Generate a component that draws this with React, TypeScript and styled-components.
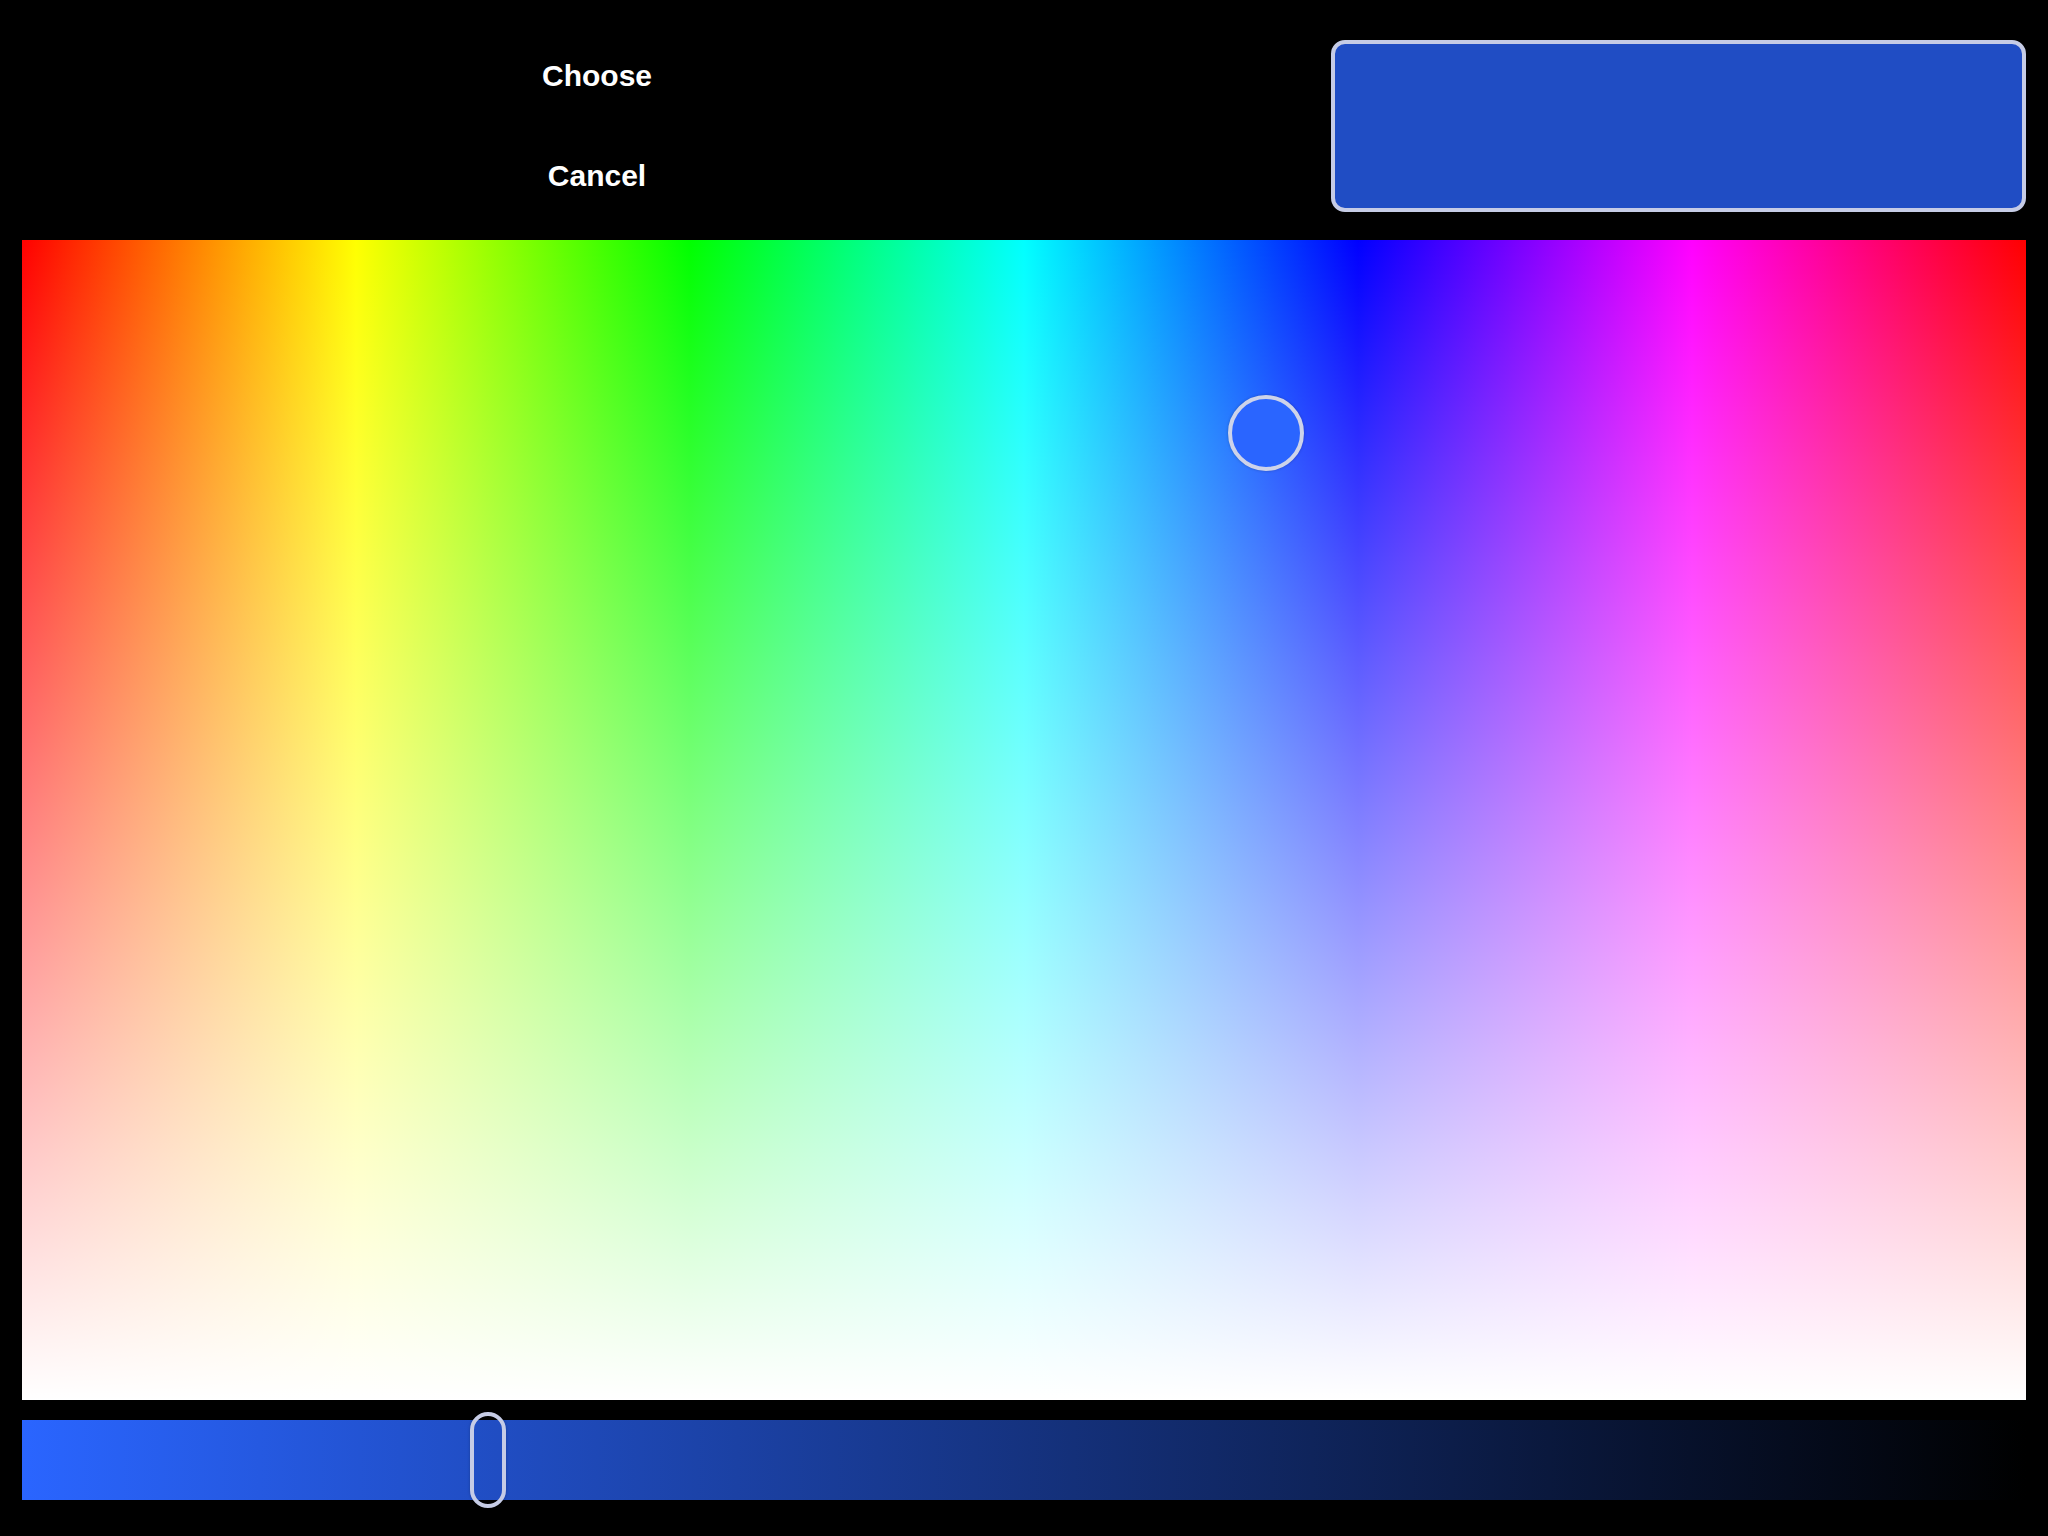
import React from "react";
import styled, { createGlobalStyle } from "styled-components";

const GlobalStyle = createGlobalStyle`
  html, body {
    margin: 0;
    padding: 0;
    background: #000;
  }
  body {
    font-family: "Liberation Sans", Arial, Helvetica, sans-serif;
    -webkit-font-smoothing: antialiased;
  }
  * { box-sizing: border-box; }
`;

const Page = styled.div`
  width: 2048px;
  height: 1536px;
  background: #000;
  padding: 40px 22px 36px 22px;
  display: flex;
  flex-direction: column;
`;

const TopRow = styled.div`
  display: grid;
  grid-template-columns: 1150px 1fr;
  column-gap: 159px;
  height: 172px;
`;

const Actions = styled.div`
  display: flex;
  flex-direction: column;
  align-items: center;
  gap: 29px;
`;

const ActionButton = styled.button`
  height: 71px;
  padding: 0 24px;
  border: none;
  background: transparent;
  color: #fff;
  font-family: "Liberation Sans", Arial, Helvetica, sans-serif;
  font-weight: 700;
  font-size: 30px;
  line-height: 1;
  cursor: pointer;
`;

const Preview = styled.div<{ $color: string }>`
  height: 172px;
  border: 4px solid #c6cce6;
  border-radius: 14px;
  background: ${(p) => p.$color};
`;

const Field = styled.div`
  position: relative;
  margin-top: 28px;
  height: 1160px;
  background:
    linear-gradient(to bottom, rgba(255, 255, 255, 0), #ffffff),
    linear-gradient(
      to right,
      #ff0000 0%,
      #ffff00 16.667%,
      #00ff00 33.333%,
      #00ffff 50%,
      #0000ff 66.667%,
      #ff00ff 83.333%,
      #ff0000 100%
    );
`;

const Handle = styled.div<{ $color: string }>`
  position: absolute;
  width: 76px;
  height: 76px;
  margin: -38px 0 0 -38px;
  border-radius: 50%;
  border: 4px solid #cdd3ea;
  background: ${(p) => p.$color};
  box-shadow: 0 0 3px rgba(0, 0, 0, 0.25);
`;

const Slider = styled.div<{ $color: string }>`
  position: relative;
  margin-top: 20px;
  height: 80px;
  background: linear-gradient(to right, ${(p) => p.$color}, #000000);
`;

const Thumb = styled.div`
  position: absolute;
  top: -8px;
  width: 36px;
  height: 96px;
  margin-left: -18px;
  border: 4px solid #c6cce6;
  border-radius: 18px;
  background: transparent;
  box-shadow: 0 0 3px rgba(0, 0, 0, 0.25);
`;

function hsv(h: number, s: number, v: number): string {
  const f = (n: number) => {
    const k = (n + h / 60) % 6;
    return v - v * s * Math.max(0, Math.min(k, 4 - k, 1));
  };
  const c = (x: number) => Math.round(x * 255).toString(16).padStart(2, "0");
  return `#${c(f(5))}${c(f(3))}${c(f(1))}`;
}

const FIELD_W = 2004;
const FIELD_H = 1160;
const SLIDER_W = 2004;

export default function App() {
  const hue = 223.5;
  const sat = 0.834;
  const val = 0.7675;
  const full = hsv(hue, sat, 1);
  const current = hsv(hue, sat, val);
  const hx = (hue / 360) * FIELD_W;
  const hy = (1 - sat) * FIELD_H;
  const tx = (1 - val) * SLIDER_W;

  return (
    <>
      <GlobalStyle />
      <Page>
        <TopRow>
          <Actions>
            <ActionButton>Choose</ActionButton>
            <ActionButton>Cancel</ActionButton>
          </Actions>
          <Preview $color={current} />
        </TopRow>
        <Field>
          <Handle $color={full} style={{ left: hx, top: hy }} />
        </Field>
        <Slider $color={full}>
          <Thumb style={{ left: tx }} />
        </Slider>
      </Page>
    </>
  );
}
